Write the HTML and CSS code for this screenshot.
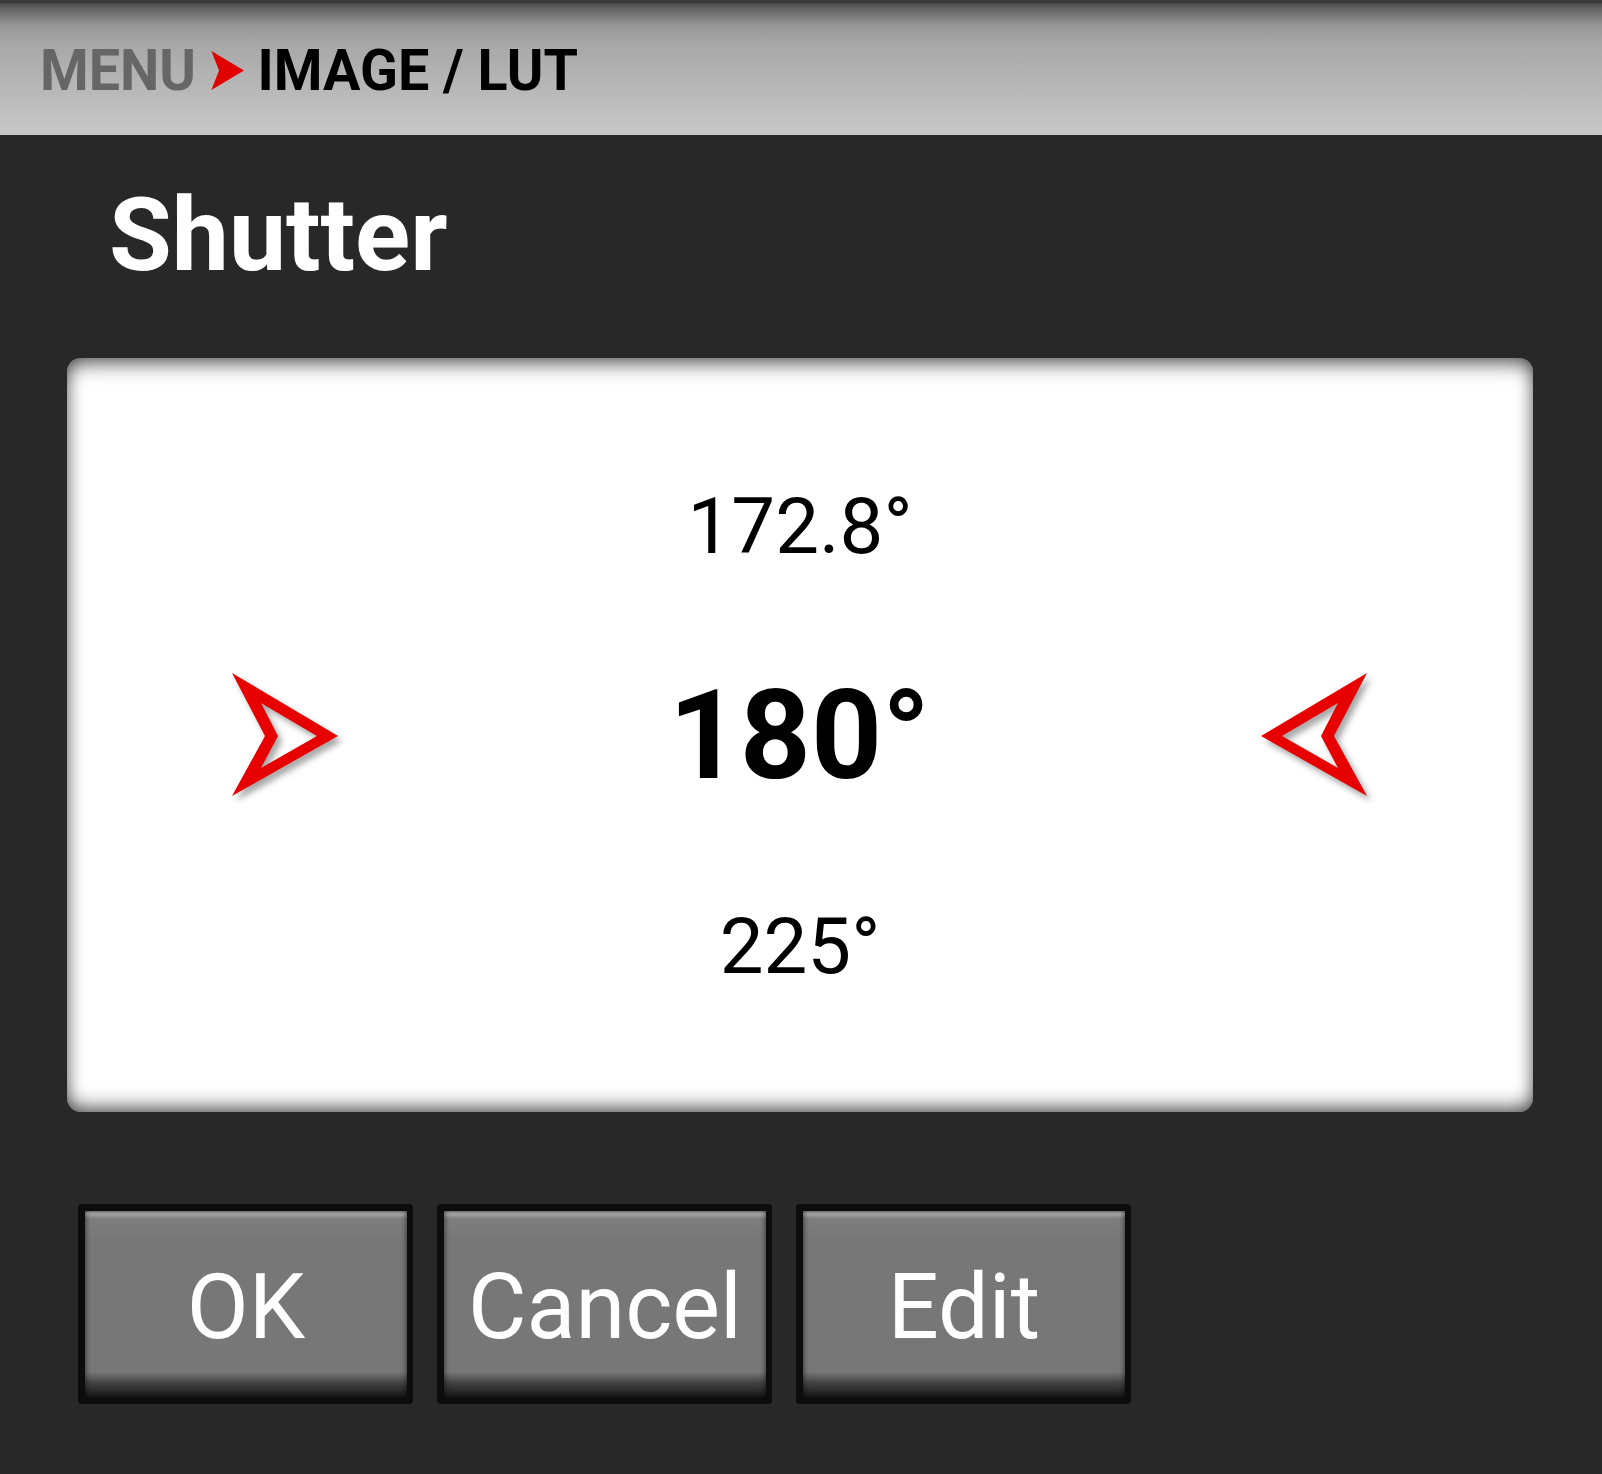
FILE: index.html
```html
<!DOCTYPE html>
<html lang="en">
<head>
    <meta charset="UTF-8">
    <meta name="viewport" content="width=device-width, initial-scale=1.0">
    <title>Shutter</title>

    <link rel="stylesheet" href="styles.css">
</head>
<body>

    <div class="header">
        <div class="crumbs">
            <span class="crumbParent">MENU</span>
            <svg class="crumbArrow" viewBox="0 0 34 39" width="35" height="39">
                <polygon points="0,0 34,19.5 0,39 8,19.5" fill="#e00000"/>
            </svg>
            <span class="crumbCurrent">IMAGE / LUT</span>
        </div>
    </div>

    <h1 class="title">Shutter</h1>

    <div class="panel">
        <div class="row">172.8°</div>
        <div class="row current">
            <svg class="arrow" viewBox="0 0 106 123" width="106" height="123">
                <path d="M0,0 L106,63 L0,123 L33,63 Z M29,30 L46,63 L29,95 L85,63 Z" fill="#e60000" fill-rule="evenodd"/>
            </svg>
            <span class="value">180°</span>
            <svg class="arrow flipped" viewBox="0 0 106 123" width="106" height="123">
                <path d="M0,0 L106,63 L0,123 L33,63 Z M29,30 L46,63 L29,95 L85,63 Z" fill="#e60000" fill-rule="evenodd"/>
            </svg>
        </div>
        <div class="row">225°</div>
    </div>

    <div class="buttons">
        <div class="button"><div class="face">OK</div></div>
        <div class="button"><div class="face">Cancel</div></div>
        <div class="button"><div class="face">Edit</div></div>
    </div>

</body>
</html>
```

FILE: styles.css
```css
body {
    font-family: Roboto, "Liberation Sans", sans-serif;
    margin: 0;
    background-color: rgb(40, 40, 40);
    color: white;
    height: 1474px;
    overflow: hidden;
}

.header {
    height: 135px;
    border-top: 3px solid rgb(58, 58, 58);
    background: linear-gradient(rgb(72, 72, 72) 0, rgb(100, 100, 100) 6px, rgb(150, 150, 150) 22px, rgb(168, 168, 168) 42px, rgb(200, 200, 200) 100%);
    display: flex;
    align-items: center;
    padding-left: 40px;
    box-sizing: border-box;
}

.crumbs {
    display: flex;
    align-items: center;
    font-size: 58px;
    font-weight: bold;
    transform: scaleX(0.96);
    transform-origin: left center;
    white-space: nowrap;
    margin-top: 2px;
}

.crumbParent {
    color: rgb(102, 102, 102);
}

.crumbArrow {
    margin: 0 14px 0 15px;
}

.crumbCurrent {
    color: black;
}

.title {
    font-size: 102px;
    font-weight: bold;
    line-height: 122px;
    margin: 39px 0 0 109px;
}

.panel {
    margin: 62px 0 0 67px;
    width: 1466px;
    height: 754px;
    background-color: white;
    border-radius: 14px;
    box-shadow: inset 0 0 18px rgba(0, 0, 0, 0.4),
                inset 0 14px 22px -10px rgba(0, 0, 0, 0.55),
                inset 0 -12px 22px -10px rgba(0, 0, 0, 0.6);
    display: flex;
    flex-direction: column;
    justify-content: center;
    color: black;
}

.row {
    height: 210px;
    display: flex;
    align-items: center;
    justify-content: center;
    font-size: 78px;
    line-height: 1;
    padding-top: 3px;
    box-sizing: border-box;
}

.row.current {
    justify-content: space-between;
    padding: 2px 166px 0 165px;
}

.value {
    font-size: 124px;
    font-weight: bold;
}

.arrow {
    margin-top: -4px;
    filter: drop-shadow(4px 5px 3px rgba(0, 0, 0, 0.35));
}

.arrow.flipped {
    transform: scaleX(-1);
    filter: drop-shadow(-4px 5px 3px rgba(0, 0, 0, 0.35));
}

.buttons {
    display: flex;
    gap: 24px;
    margin: 92px 0 0 78px;
}

.button {
    width: 335px;
    height: 200px;
    background-color: rgb(12, 12, 12);
    border-radius: 4px;
    padding: 7px 6px 6px 7px;
    box-sizing: border-box;
}

.face {
    height: 100%;
    background: linear-gradient(rgb(120, 120, 120) 0, rgb(165, 165, 165) 3px, rgb(125, 125, 125) 8px, rgb(119, 119, 119) 30px, rgb(119, 119, 119) calc(100% - 26px), rgb(70, 70, 70) calc(100% - 16px), rgb(18, 18, 18) 100%);
    box-shadow: inset 4px 0 5px -3px rgba(0, 0, 0, 0.5), inset -4px 0 5px -3px rgba(0, 0, 0, 0.5);
    display: flex;
    align-items: center;
    justify-content: center;
    font-size: 90px;
    padding-top: 6px;
    box-sizing: border-box;
}
```
